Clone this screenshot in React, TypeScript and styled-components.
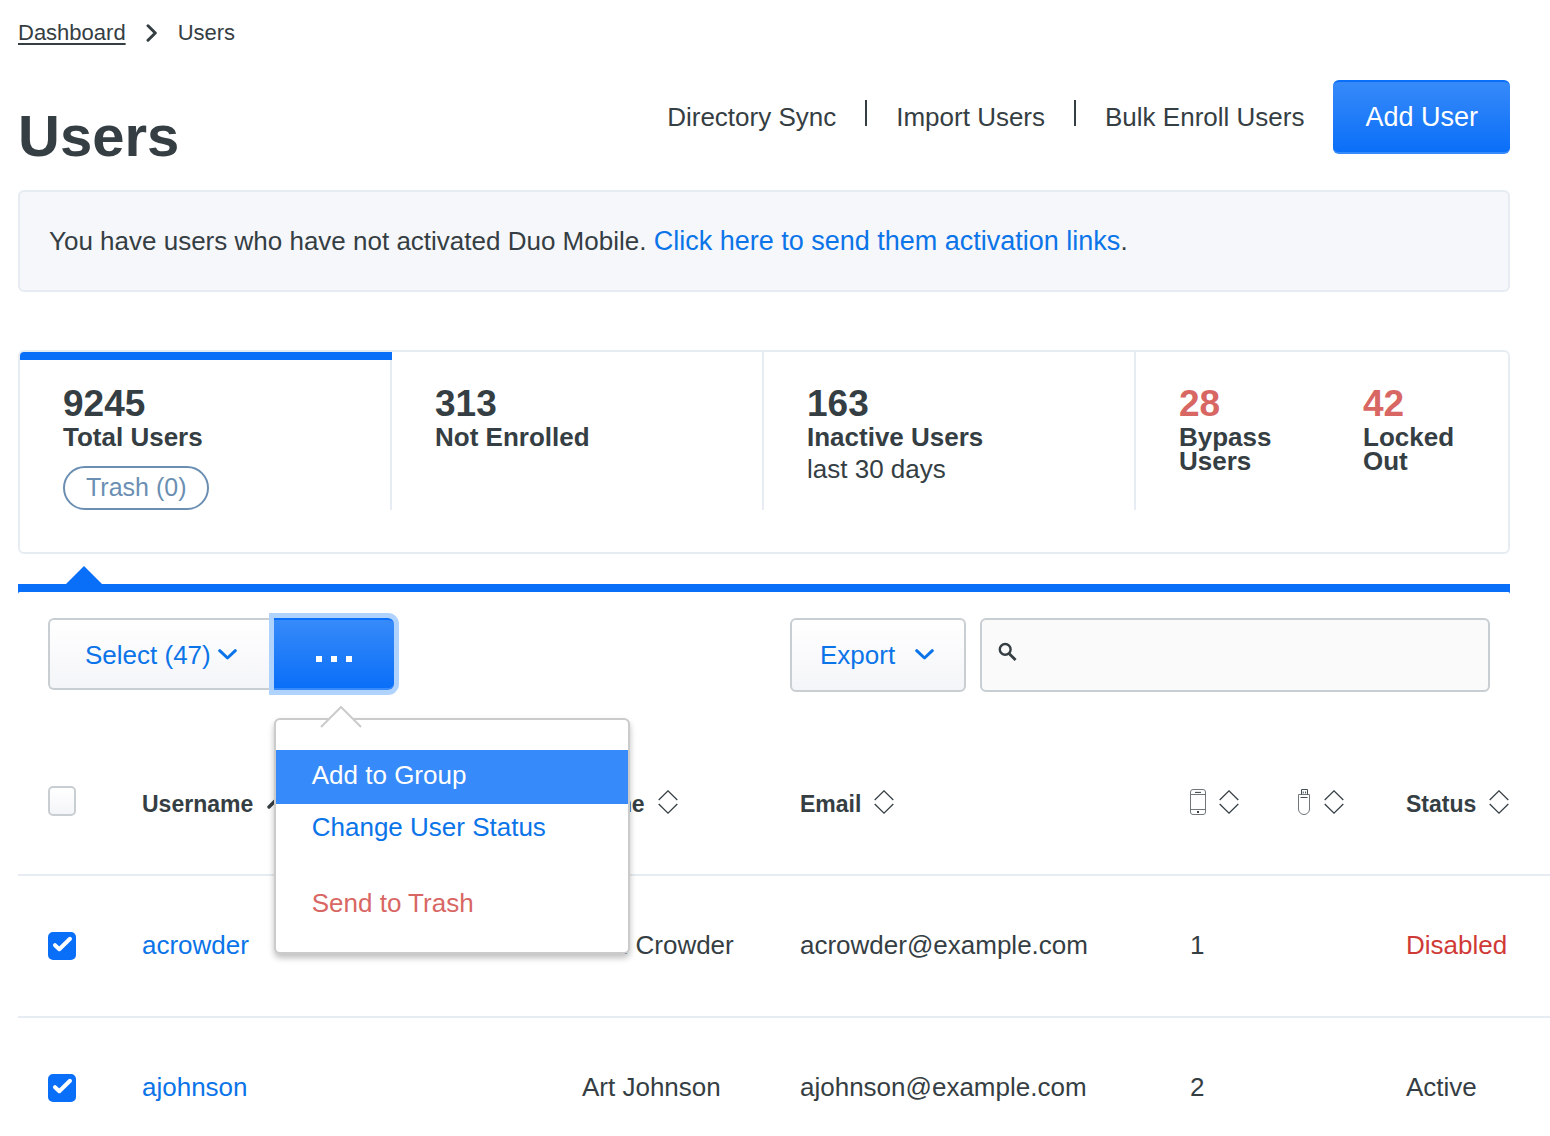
import React, { useState } from "react";
import styled, { createGlobalStyle, css } from "styled-components";

const color = {
  text: "#353e43",
  link: "#0b74e8",
  blue: "#0a6ff8",
  blueLight: "#378af9",
  line: "#e7ecf2",
  control: "#c9ced2",
  red: "#d86764",
  redStrong: "#d03a36",
  pill: "#6a8fb3",
};

const GlobalStyle = createGlobalStyle`
  *, *::before, *::after { box-sizing: border-box; }
  body {
    margin: 0;
    background: #fff;
    color: ${color.text};
    font-family: "Liberation Sans", Arial, sans-serif;
    font-size: 26px;
    line-height: 30px;
  }
  button, input { font: inherit; color: inherit; }
  svg { display: block; flex: none; }
`;

const Page = styled.main`
  padding: 20px 0 0 18px;
`;

const Content = styled.div`
  margin-right: 40px;
`;

const Breadcrumbs = styled.nav`
  display: flex;
  align-items: center;
  gap: 20px;
  font-size: 22px;
  line-height: 26px;
`;

const CrumbLink = styled.a`
  color: inherit;
  text-decoration: underline;
  text-decoration-thickness: 2px;
  text-underline-offset: 3px;
`;

const Header = styled.header`
  display: flex;
  justify-content: space-between;
  align-items: flex-start;
  margin-top: 34px;
`;

const Title = styled.h1`
  margin: 22px 0 0;
  font-size: 58px;
  line-height: 68px;
  font-weight: bold;
`;

const HeaderActions = styled.div`
  display: flex;
  align-items: center;
  gap: 29px;
`;

const HeaderLink = styled.a`
  color: inherit;
  text-decoration: none;
`;

const Separator = styled.span`
  width: 2px;
  height: 26px;
  margin-bottom: 8px;
  background: ${color.text};
`;

const primaryFill = css`
  color: #fff;
  background: linear-gradient(${color.blueLight}, ${color.blue});
  border: solid ${color.blue};
  border-width: 2px 0;
  border-bottom-color: ${color.blueLight};
`;

const secondaryFill = css`
  color: ${color.link};
  background: linear-gradient(#fff, #f4f5f8);
  border: 2px solid ${color.control};
`;

const AddButton = styled.button`
  ${primaryFill}
  height: 74px;
  padding: 0 32px;
  border-radius: 6px;
  font-size: 27px;
`;

const Notice = styled.p`
  margin: 20px 0 0;
  padding: 34px 29px;
  border: 2px solid ${color.line};
  border-radius: 6px;
  background: #f5f7fb;
`;

const TextLink = styled.a`
  color: ${color.link};
  text-decoration: none;
`;

const NoticeLink = styled(TextLink)`
  font-size: 27px;
`;

const Stats = styled.section`
  display: grid;
  grid-template-columns: repeat(4, 1fr);
  margin-top: 58px;
  padding-bottom: 42px;
  border: 2px solid ${color.line};
  border-radius: 6px;
  overflow: hidden;
`;

const StatCell = styled.div<{ $active?: boolean }>`
  position: relative;
  display: grid;
  grid-auto-flow: column;
  grid-auto-columns: 1fr;
  min-height: 158px;
  border-right: 2px solid ${color.line};
  &:last-child {
    border-right: 0;
    padding-right: 4px;
  }
  ${(p) =>
    p.$active &&
    css`
      &::before {
        content: "";
        position: absolute;
        inset: 0 -2px auto 0;
        height: 8px;
        background: ${color.blue};
      }
    `}
`;

const Stat = styled.div`
  display: flex;
  flex-direction: column;
  align-items: flex-start;
  padding: 31px 28px 0 43px;
`;

const StatValue = styled.strong<{ $alert?: boolean }>`
  font-size: 37px;
  line-height: 42px;
  color: ${(p) => (p.$alert ? color.red : "inherit")};
`;

const StatLabel = styled.span`
  font-weight: bold;
  line-height: 24px;
`;

const StatNote = styled.span`
  margin-top: 5px;
`;

const TrashButton = styled.button`
  height: 44px;
  margin-top: 17px;
  padding: 0 21px 2px;
  border: 2px solid ${color.pill};
  border-radius: 22px;
  background: #fff;
  color: ${color.pill};
  font-size: 25px;
`;

const PanelTop = styled.div`
  position: relative;
  margin-top: 30px;
  padding-top: 8px;
  background: ${color.blue};
  &::before {
    content: "";
    position: absolute;
    left: 48px;
    bottom: 100%;
    border: solid transparent;
    border-width: 0 18px 18px;
    border-bottom-color: ${color.blue};
  }
  &::after {
    content: "";
    display: block;
    height: 2px;
    border-radius: 2px 2px 0 0;
    background: #fff;
  }
`;

const Toolbar = styled.div`
  display: flex;
  align-items: flex-start;
  justify-content: space-between;
  gap: 14px;
  padding: 24px 20px 0 30px;
`;

const ButtonGroup = styled.div`
  display: flex;
`;

const Filters = styled.div`
  display: flex;
  flex: 0 1 700px;
  gap: 14px;
`;

const SelectButton = styled.button`
  ${secondaryFill}
  display: flex;
  align-items: center;
  gap: 7px;
  height: 72px;
  padding: 2px 37px 0 35px;
  border-right: 0;
  border-radius: 6px 0 0 6px;
`;

const ExportButton = styled.button`
  ${secondaryFill}
  display: flex;
  align-items: center;
  gap: 20px;
  height: 74px;
  padding: 0 30px 0 28px;
  border-radius: 6px;
`;

const SearchBox = styled.label`
  display: flex;
  flex: 1;
  gap: 12px;
  height: 74px;
  padding: 0 16px;
  align-items: center;
  border: 2px solid ${color.control};
  border-radius: 6px;
  background: #fafafa;
  & > svg {
    margin-bottom: 6px;
  }
`;

const SearchInput = styled.input`
  flex: 1;
  min-width: 0;
  border: 0;
  outline: 0;
  background: transparent;
`;

const MenuAnchor = styled.div`
  position: relative;
`;

const MoreButton = styled.button`
  ${primaryFill}
  display: flex;
  align-items: center;
  justify-content: center;
  width: 120px;
  height: 72px;
  padding: 10px 0 0;
  border-radius: 0 6px 6px 0;
  outline: 0;
  box-shadow: 0 0 0 5px #b0d3fe;
`;

const Menu = styled.div`
  position: absolute;
  z-index: 2;
  top: 100px;
  left: 0;
  width: 356px;
  padding: 30px 0 22px;
  border: 2px solid #cbcbcb;
  border-radius: 6px;
  background: #fff;
  box-shadow: 0 4px 6px rgba(0, 0, 0, 0.25);
`;

const MenuArrow = styled.svg`
  position: absolute;
  top: -14px;
  left: 44px;
`;

const MenuItem = styled.button<{ $active?: boolean; $danger?: boolean }>`
  display: block;
  width: 100%;
  height: 54px;
  margin: 0 0 -2px;
  padding: 0 36px 4px;
  border: 0;
  text-align: left;
  background: ${(p) => (p.$active ? color.blueLight : "transparent")};
  color: ${(p) => (p.$active ? "#fff" : p.$danger ? color.red : color.link)};
`;

const MenuGap = styled.hr`
  height: 24px;
  margin: 0;
  border: 0;
`;

const Table = styled.table`
  width: 100%;
  table-layout: fixed;
  border-spacing: 0;
`;

const HeadCell = styled.th`
  padding: 94px 0 52px;
  border-bottom: 2px solid ${color.line};
  text-align: left;
  vertical-align: top;
  font-size: 23px;
  &:first-child {
    padding-left: 30px;
  }
`;

const Cell = styled.td`
  padding: 54px 0 56px;
  border-bottom: 2px solid ${color.line};
  vertical-align: top;
  white-space: nowrap;
  &:first-child {
    padding-top: 56px;
    padding-left: 30px;
  }
  tr:last-child > & {
    padding-bottom: 24px;
    border-bottom: 0;
  }
`;

const SortButton = styled.button`
  display: flex;
  align-items: center;
  gap: 13px;
  height: 36px;
  padding: 0;
  border: 0;
  background: none;
  & > svg {
    margin-bottom: 4px;
  }
`;

const Status = styled.span<{ $disabled: boolean }>`
  color: ${(p) => (p.$disabled ? color.redStrong : "inherit")};
`;

const CheckWrap = styled.span<{ $tall?: boolean }>`
  position: relative;
  display: block;
  width: 28px;
  height: ${(p) => (p.$tall ? 30 : 28)}px;
  & > svg {
    position: absolute;
    inset: 0;
    pointer-events: none;
  }
`;

const CheckInput = styled.input`
  appearance: none;
  display: block;
  width: 100%;
  height: 100%;
  margin: 0;
  border: 2px solid ${color.control};
  border-radius: 5px;
  background: linear-gradient(#fff, #f4f5f8);
  &:checked {
    border-color: ${color.blue};
    background: ${color.blue};
  }
`;

function Checkbox({ label, checked, tall, onToggle }: { label: string; checked: boolean; tall?: boolean; onToggle: () => void }) {
  return (
    <CheckWrap $tall={tall}>
      <CheckInput type="checkbox" aria-label={label} checked={checked} onChange={onToggle} />
      {checked && (
        <svg width="28" height="28" viewBox="0 0 28 28" fill="none" stroke="#fff" strokeWidth="4" strokeLinecap="round" strokeLinejoin="round">
          <path d="M7 13.2 L11.3 17.2 L22 6.8" />
        </svg>
      )}
    </CheckWrap>
  );
}

const ChevronDown = () => (
  <svg width="19" height="12" viewBox="0 0 19 12" fill="none" stroke="currentColor" strokeWidth="3" strokeLinecap="round" strokeLinejoin="round">
    <path d="M1.7 1.7 L9.5 9 L17.3 1.7" />
  </svg>
);

const ChevronRight = () => (
  <svg width="12" height="18" viewBox="0 0 12 18" fill="none" stroke="currentColor" strokeWidth="3" strokeLinecap="round" strokeLinejoin="round">
    <path d="M2 1.8 L9.3 9 L2 16.2" />
  </svg>
);

const SortIcon = () => (
  <svg width="20" height="24" viewBox="0 0 20 24" fill="none" stroke="currentColor" strokeWidth="1.3">
    <path d="M0.7 10 L10 0.9 L19.3 10 M0.7 14 L10 23.1 L19.3 14" />
  </svg>
);

const SortedIcon = () => (
  <svg width="20" height="14" viewBox="0 0 20 14" fill="none" stroke="currentColor" strokeWidth="3.4" strokeLinecap="round" strokeLinejoin="round">
    <path d="M3 12 L10.5 4.5 L18 12" />
  </svg>
);

const PhoneIcon = () => (
  <svg width="16" height="26" viewBox="0 0 16 26" fill="none" stroke="#6f777b" strokeWidth="1">
    <rect x="0.5" y="0.5" width="15" height="25" rx="2.5" />
    <path d="M0.5 5.5 H15.5 M0.5 20.5 H15.5" />
    <path d="M5 3.4 H11" stroke="#353e43" />
    <rect x="7" y="22" width="2" height="2" fill="#353e43" stroke="none" />
  </svg>
);

const UsbIcon = () => (
  <svg width="14" height="26" viewBox="0 0 14 26" fill="none" stroke="#6f777b" strokeWidth="1">
    <path d="M1.5 5.5 H12.5 V20 A5.5 5.5 0 0 1 1.5 20 Z" />
    <path d="M4.5 5.5 V0.5 H10.5 V5.5 M6.2 2.5 V4.5 M8.6 2.5 V4.5 M3.5 8.5 H10.5" stroke="#454e53" />
  </svg>
);

const SearchIcon = () => (
  <svg width="19" height="20" viewBox="0 0 19 20" fill="none" stroke="currentColor">
    <circle cx="7.2" cy="7.4" r="5.4" strokeWidth="2.4" />
    <path d="M11 11.4 L17.6 18" strokeWidth="2.8" />
  </svg>
);

const DotsIcon = () => (
  <svg width="36" height="6" viewBox="0 0 36 6" fill="currentColor">
    <path d="M0 0h6v6H0zM15 0h6v6h-6zM30 0h6v6h-6z" />
  </svg>
);

const initialUsers = [
  { username: "acrowder", name: "Ann Crowder", email: "acrowder@example.com", phones: 1, status: "Disabled" },
  { username: "ajohnson", name: "Art Johnson", email: "ajohnson@example.com", phones: 2, status: "Active" },
];

export default function App() {
  const [selected, setSelected] = useState<string[]>(["acrowder", "ajohnson"]);
  const [allSelected, setAllSelected] = useState(false);

  const toggle = (name: string) =>
    setSelected((prev) => (prev.includes(name) ? prev.filter((n) => n !== name) : [...prev, name]));

  return (
    <>
      <GlobalStyle />
      <Page>
        <Content>
          <Breadcrumbs aria-label="Breadcrumb">
            <CrumbLink href="#dashboard">Dashboard</CrumbLink>
            <ChevronRight />
            <span>Users</span>
          </Breadcrumbs>

          <Header>
            <Title>Users</Title>
            <HeaderActions>
              <HeaderLink href="#sync">Directory Sync</HeaderLink>
              <Separator />
              <HeaderLink href="#import">Import Users</HeaderLink>
              <Separator />
              <HeaderLink href="#enroll">Bulk Enroll Users</HeaderLink>
              <AddButton type="button">Add User</AddButton>
            </HeaderActions>
          </Header>

          <Notice>
            You have users who have not activated Duo Mobile.{" "}
            <NoticeLink href="#activate">Click here to send them activation links</NoticeLink>.
          </Notice>

          <Stats>
            <StatCell $active>
              <Stat>
                <StatValue>9245</StatValue>
                <StatLabel>Total Users</StatLabel>
                <TrashButton type="button">Trash (0)</TrashButton>
              </Stat>
            </StatCell>
            <StatCell>
              <Stat>
                <StatValue>313</StatValue>
                <StatLabel>Not Enrolled</StatLabel>
              </Stat>
            </StatCell>
            <StatCell>
              <Stat>
                <StatValue>163</StatValue>
                <StatLabel>Inactive Users</StatLabel>
                <StatNote>last 30 days</StatNote>
              </Stat>
            </StatCell>
            <StatCell>
              <Stat>
                <StatValue $alert>28</StatValue>
                <StatLabel>Bypass Users</StatLabel>
              </Stat>
              <Stat>
                <StatValue $alert>42</StatValue>
                <StatLabel>Locked Out</StatLabel>
              </Stat>
            </StatCell>
          </Stats>

          <PanelTop />
          <Toolbar>
            <ButtonGroup>
              <SelectButton type="button">
                Select (47)
                <ChevronDown />
              </SelectButton>
              <MenuAnchor>
                <MoreButton type="button" aria-label="More actions" aria-haspopup="menu" aria-expanded="true">
                  <DotsIcon />
                </MoreButton>
                <Menu role="menu">
                  <MenuArrow width="42" height="22" viewBox="0 0 42 22" fill="none">
                    <path d="M1 21 L21 1 L41 21 Z" fill="#fff" />
                    <path d="M1 21 L21 1 L41 21" stroke="#cbcbcb" strokeWidth="2" />
                  </MenuArrow>
                  <MenuItem type="button" role="menuitem" $active>Add to Group</MenuItem>
                  <MenuItem type="button" role="menuitem">Change User Status</MenuItem>
                  <MenuGap />
                  <MenuItem type="button" role="menuitem" $danger>Send to Trash</MenuItem>
                </Menu>
              </MenuAnchor>
            </ButtonGroup>
            <Filters>
              <ExportButton type="button">
                Export
                <ChevronDown />
              </ExportButton>
              <SearchBox>
                <SearchIcon />
                <SearchInput type="search" aria-label="Search users" />
              </SearchBox>
            </Filters>
          </Toolbar>
        </Content>

        <Table>
          <colgroup>
            <col width="124" />
            <col />
            <col width="218" />
            <col width="390" />
            <col width="107" />
            <col width="109" />
            <col width="144" />
          </colgroup>
          <thead>
            <tr>
              <HeadCell>
                <Checkbox label="Select all users" tall checked={allSelected} onToggle={() => setAllSelected(!allSelected)} />
              </HeadCell>
              <HeadCell><SortButton type="button">Username <SortedIcon /></SortButton></HeadCell>
              <HeadCell><SortButton type="button">Name <SortIcon /></SortButton></HeadCell>
              <HeadCell><SortButton type="button">Email <SortIcon /></SortButton></HeadCell>
              <HeadCell><SortButton type="button" aria-label="Phones"><PhoneIcon /><SortIcon /></SortButton></HeadCell>
              <HeadCell><SortButton type="button" aria-label="Tokens"><UsbIcon /><SortIcon /></SortButton></HeadCell>
              <HeadCell><SortButton type="button">Status <SortIcon /></SortButton></HeadCell>
            </tr>
          </thead>
          <tbody>
            {initialUsers.map((user) => (
              <tr key={user.username}>
                <Cell>
                  <Checkbox
                    label={`Select ${user.username}`}
                    checked={selected.includes(user.username)}
                    onToggle={() => toggle(user.username)}
                  />
                </Cell>
                <Cell><TextLink href={`#${user.username}`}>{user.username}</TextLink></Cell>
                <Cell>{user.name}</Cell>
                <Cell>{user.email}</Cell>
                <Cell>{user.phones}</Cell>
                <Cell />
                <Cell><Status $disabled={user.status === "Disabled"}>{user.status}</Status></Cell>
              </tr>
            ))}
          </tbody>
        </Table>
      </Page>
    </>
  );
}
